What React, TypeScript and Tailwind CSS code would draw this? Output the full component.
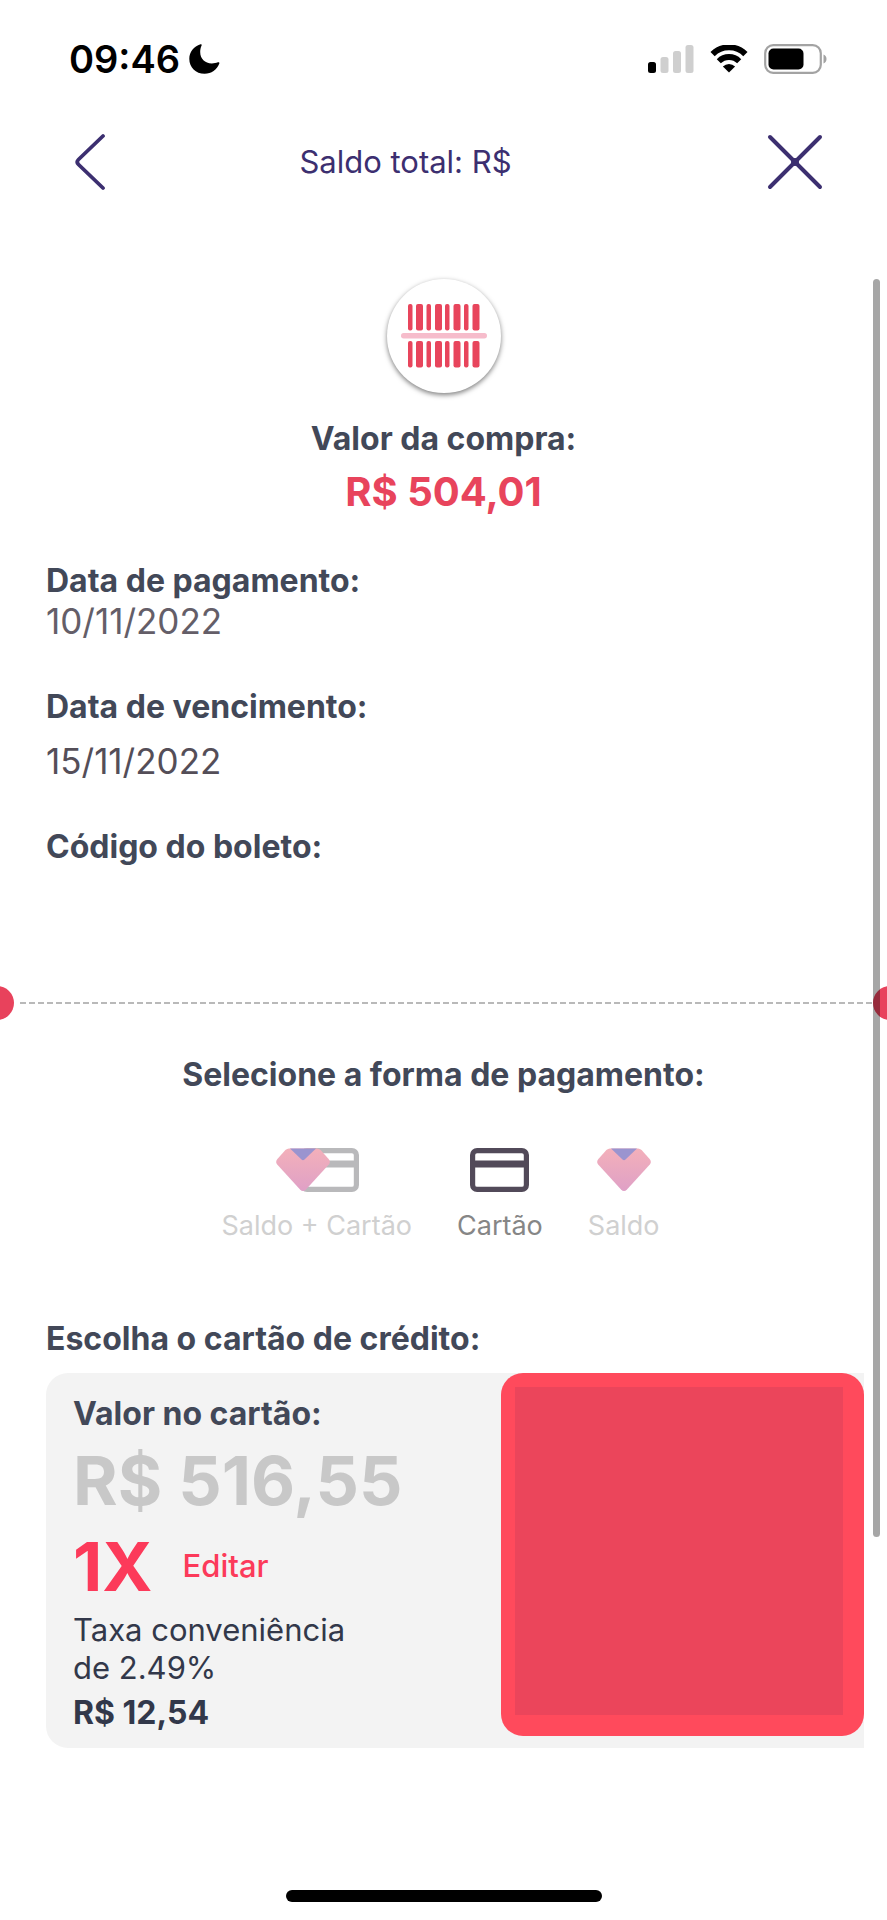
import { useId, useState } from "react";
import type { ReactNode } from "react";

const LABEL = "text-[32px] leading-10 font-bold text-[#424858]";

function StatusBar() {
  return (
    <div className="flex h-[118px] items-center justify-between pr-[60px] pl-[69px]">
      <div className="flex items-center gap-[9px]">
        <span className="text-[38px] leading-10 font-semibold text-black">09:46</span>
        <svg width="31" height="30" viewBox="0 0 31 30" aria-hidden="true">
          <path d="M11.5 0.3C12.3 0 13 0.7 12.6 1.5C11.6 3.6 11.2 5.6 11.2 8C11.2 14.8 15.9 19.4 22.8 19.4C25.2 19.4 27.2 19 28.9 18.3C30 17.9 30.7 18.6 30.3 19.6C27.9 25.9 22.4 29.8 15.6 29.8C6.7 29.8 0.3 23.5 0.3 14.8C0.3 8.3 4.8 2.4 11.5 0.3Z" />
        </svg>
      </div>
      <div className="flex items-center gap-4">
        <svg width="46" height="30" viewBox="0 0 46 30" aria-hidden="true">
          <rect x="0" y="18" width="8" height="11" rx="2.5" fill="#000" />
          <rect x="12.5" y="13" width="8" height="16" rx="2.5" fill="#cfcfcf" />
          <rect x="25" y="7" width="8" height="22" rx="2.5" fill="#cfcfcf" />
          <rect x="37.5" y="1" width="8" height="28" rx="2.5" fill="#cfcfcf" />
        </svg>
        <svg width="38" height="28" viewBox="0 0 38 28" aria-hidden="true">
          <path d="M2.6 9.1A23.3 23.3 0 0 1 35.4 9.1" fill="none" stroke="#000" strokeWidth="6" />
          <path d="M8.8 16.2A14.5 14.5 0 0 1 29.2 16.2" fill="none" stroke="#000" strokeWidth="5.8" />
          <path d="M19 27.6L12.9 21.5A8.7 8.7 0 0 1 25.1 21.5Z" fill="#000" />
        </svg>
        <svg width="63" height="30" viewBox="0 0 63 30" aria-hidden="true">
          <rect x="1.2" y="1.2" width="55.6" height="27.6" rx="8" fill="#fff" stroke="#a3a3a3" strokeWidth="2.2" />
          <rect x="4.5" y="4.5" width="35" height="21" rx="5" fill="#000" />
          <path d="M59.5 10.5C61.5 11.3 62.5 13 62.5 15S61.5 18.7 59.5 19.5Z" fill="#a3a3a3" />
        </svg>
      </div>
    </div>
  );
}

function Header() {
  return (
    <header className="grid h-[88px] grid-cols-[60px_1fr_60px] items-center pr-[62px] pl-[70px] text-[#3c2f70]">
      <button type="button" aria-label="Voltar" className="flex h-[60px] items-center pl-1">
        <svg width="32" height="58" viewBox="0 0 32 58" fill="none" strokeLinecap="round" aria-hidden="true">
          <path d="M29 3L4.5 26.500Q2 29 4.500 31.500L29 55" stroke="currentColor" strokeWidth="3.8" />
        </svg>
      </button>
      <h1 className="-ml-[84px] text-center text-[31px] leading-10">Saldo total: R$</h1>
      <button type="button" aria-label="Fechar" className="flex h-[60px] items-center justify-center">
        <svg width="56" height="56" viewBox="0 0 56 56" fill="none" stroke="currentColor" strokeWidth="4" strokeLinecap="round" aria-hidden="true">
          <path d="M3 3L53 53M53 3L3 53" />
          <circle cx="28" cy="28" r="2" fill="currentColor" />
        </svg>
      </button>
    </header>
  );
}

function BarcodeBadge() {
  const bars = [
    { x: 7, w: 4.5 },
    { x: 15, w: 7 },
    { x: 25.5, w: 4.5 },
    { x: 34, w: 7 },
    { x: 44, w: 4.5 },
    { x: 52.5, w: 7 },
    { x: 63, w: 4.5 },
    { x: 71.5, w: 7 },
  ];
  return (
    <div className="flex size-[114px] items-center justify-center rounded-full bg-white shadow-[0_2px_5px_rgba(0,0,0,0.5)]">
      <svg width="86" height="66" viewBox="0 0 86 66" fill="#e8455c" aria-hidden="true">
        {bars.map((bar) => (
          <g key={bar.x}>
            <rect x={bar.x} y="1" width={bar.w} height="26.5" rx="2" />
            <rect x={bar.x} y="38" width={bar.w} height="26.5" rx="2" />
          </g>
        ))}
        <rect x="0" y="30" width="86" height="5.5" rx="2.7" fill="#f6bccb" />
      </svg>
    </div>
  );
}

function Heart({ id }: { id: string }) {
  return (
    <g>
      <defs>
        <linearGradient id={id} x1="0" y1="0" x2="0" y2="1">
          <stop offset="0" stopColor="#f3b0ba" />
          <stop offset="1" stopColor="#dfa0c6" />
        </linearGradient>
      </defs>
      <path
        d="M14 0.5H42Q44 0.5 45.6 2L53.6 11Q56 13.8 53.8 16.6L31 41.5Q28 44.5 25 41.5L2.2 16.6Q0 13.8 2.4 11L10.4 2Q12 0.5 14 0.5Z"
        fill={`url(#${id})`}
      />
      <path d="M15 0.5H41L29.5 11.5Q28 12.8 26.5 11.5Z" fill="#9a94cf" />
    </g>
  );
}

function CardOutline({ x, color }: { x: number; color: string }) {
  return (
    <g transform={`translate(${x} 0)`} fill="none" stroke={color}>
      <rect x="2.6" y="2.6" width="53.8" height="38.8" rx="4.5" strokeWidth="5.2" />
      <path d="M2.5 16H56.5" strokeWidth="6.8" />
    </g>
  );
}

function PaymentOption({
  label,
  checked,
  onSelect,
  children,
}: {
  label: string;
  checked: boolean;
  onSelect: () => void;
  children: ReactNode;
}) {
  return (
    <label className="relative flex cursor-pointer flex-col items-center">
      <input type="radio" name="forma" className="sr-only" checked={checked} onChange={onSelect} />
      {children}
      <span className={`mt-[18px] text-[27px] leading-8 ${checked ? "text-[#868686]" : "text-[#d0d0d0]"}`}>
        {label}
      </span>
    </label>
  );
}

function PaymentMethods() {
  const [method, setMethod] = useState("cartao");
  const first = useId();
  const second = useId();
  return (
    <fieldset className="flex flex-col items-center">
      <legend className={`${LABEL} w-full text-center`}>Selecione a forma de pagamento:</legend>
      <div className="mt-[53px] flex justify-center gap-[45px] pr-[6px]">
        <PaymentOption label="Saldo + Cartão" checked={method === "ambos"} onSelect={() => setMethod("ambos")}>
          <svg width="84" height="44" viewBox="0 0 84 44" aria-hidden="true">
            <CardOutline x={25} color="#b9b9bb" />
            <Heart id={first} />
          </svg>
        </PaymentOption>
        <PaymentOption label="Cartão" checked={method === "cartao"} onSelect={() => setMethod("cartao")}>
          <svg width="59" height="44" viewBox="0 0 59 44" aria-hidden="true">
            <CardOutline x={0} color="#524a59" />
          </svg>
        </PaymentOption>
        <PaymentOption label="Saldo" checked={method === "saldo"} onSelect={() => setMethod("saldo")}>
          <svg width="56" height="44" viewBox="0 0 56 44" aria-hidden="true">
            <Heart id={second} />
          </svg>
        </PaymentOption>
      </div>
    </fieldset>
  );
}

function Divider() {
  return (
    <div className="flex h-[34px] items-center overflow-hidden">
      <span className="-ml-5 size-[34px] shrink-0 rounded-full bg-[#e8425c]" />
      <span className="ml-[6px] h-[2px] flex-1 bg-[repeating-linear-gradient(90deg,#b9b9b9_0px,#b9b9b9_6px,transparent_6px,transparent_9px)]" />
      <span className="-mr-5 size-[34px] shrink-0 rounded-full bg-[#e8425c]" />
    </div>
  );
}

function CreditCardPanel() {
  return (
    <section className="mt-[14px] mr-[23px] ml-[46px] flex items-start rounded-l-[22px] bg-[#f3f3f3]">
      <div className="flex-1 pt-[21px] pb-4 pl-[27px]">
        <h3 className={LABEL}>Valor no cartão:</h3>
        <p className="mt-[14px] text-[68px] leading-[64px] font-bold text-[#c8c8c8]">R$ 516,55</p>
        <div className="mt-[22px] flex items-center gap-[30px] text-[#fc3a5a]">
          <span className="text-[68px] leading-[64px] font-bold">1X</span>
          <button type="button" className="text-[31px] leading-10 font-medium">
            Editar
          </button>
        </div>
        <p className="mt-[13px] text-[31px] leading-[38px] text-[#32384a]">
          Taxa conveniência
          <br />
          de 2.49%
        </p>
        <p className="mt-[7px] text-[32px] leading-[38px] font-bold text-[#32384a]">R$ 12,54</p>
      </div>
      <div className="flex size-[363px] shrink-0 rounded-[22px] bg-[#ff4a5c] pt-[14px] pr-[21px] pb-[21px] pl-[14px]">
        <div className="flex-1 bg-[#eb455b]" />
      </div>
    </section>
  );
}

export default function App() {
  return (
    <div className="relative flex min-h-screen flex-col bg-white font-['Inter',sans-serif]">
      <StatusBar />
      <Header />
      <main className="flex-1 pt-[73px]">
        <section className="flex flex-col items-center">
          <BarcodeBadge />
          <h2 className={`mt-[26px] ${LABEL}`}>Valor da compra:</h2>
          <p className="mt-[9px] text-[40px] leading-[48px] font-bold text-[#e8445c]">R$ 504,01</p>
        </section>
        <dl className="mt-[45px] px-[46px]">
          <dt className={LABEL}>Data de pagamento:</dt>
          <dd className="text-[35px] leading-10 text-[#645e68]">10/11/2022</dd>
          <dt className={`mt-[46px] ${LABEL}`}>Data de vencimento:</dt>
          <dd className="mt-[14px] text-[35px] leading-10 text-[#544e58]">15/11/2022</dd>
          <dt className={`mt-[46px] ${LABEL}`}>Código do boleto:</dt>
        </dl>
        <div className="mt-[119px] mb-[35px]">
          <Divider />
        </div>
        <PaymentMethods />
        <h2 className={`mt-[77px] pl-[46px] ${LABEL}`}>Escolha o cartão de crédito:</h2>
        <CreditCardPanel />
      </main>
      <footer className="flex justify-center pb-[18px]">
        <span className="h-3 w-[316px] rounded-full bg-black" />
      </footer>
      <div className="absolute top-[279px] right-[7px] h-[1258px] w-[7px] rounded-full bg-black/35" />
    </div>
  );
}
